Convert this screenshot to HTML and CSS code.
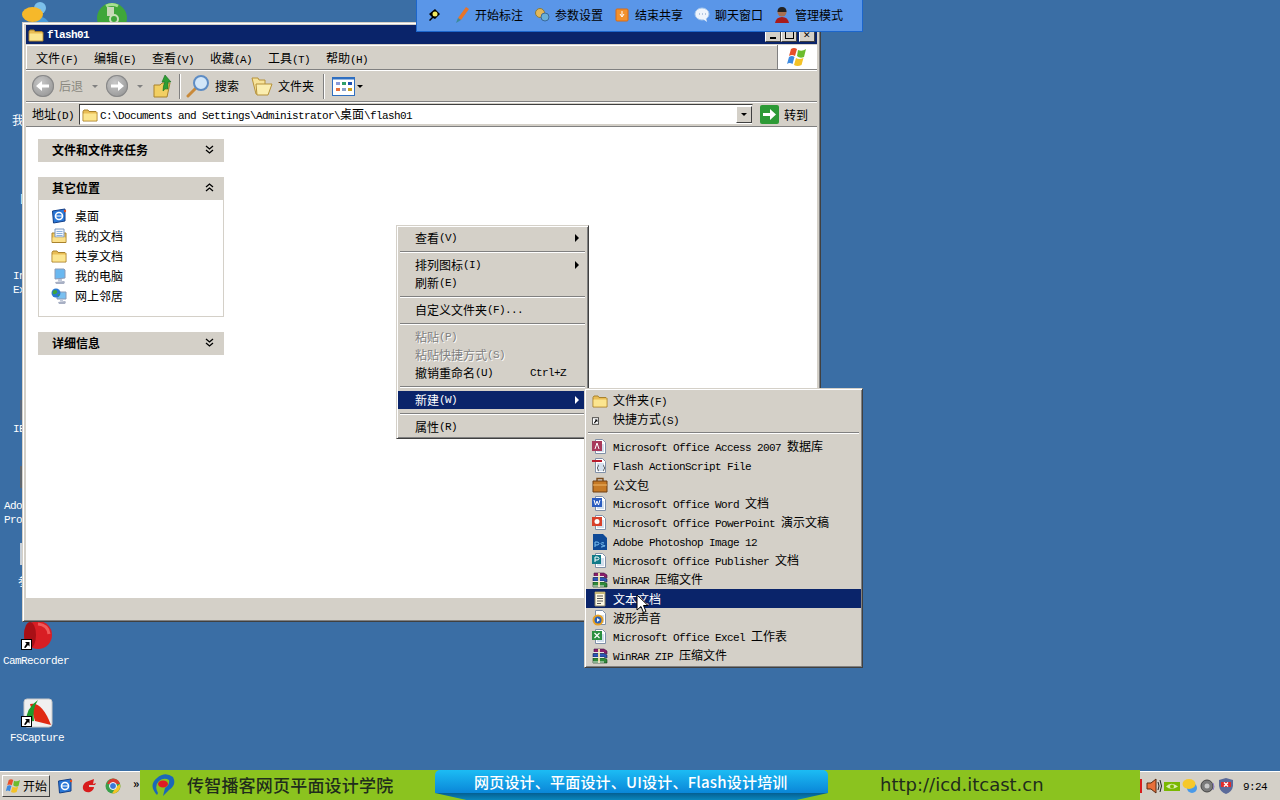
FILE: index.html
```html
<!DOCTYPE html>
<html lang="zh-CN">
<head>
    <meta charset="UTF-8">
    <title>flash01</title>
    <link rel="stylesheet" href="styles.css">
</head>
<body>
    <svg class="defs" xmlns="http://www.w3.org/2000/svg">
        <symbol id="i-folder" viewBox="0 0 16 16">
            <path d="M1 4.500 2 3h4l1 1.500h7l1 1V14H1z" fill="#e9bd55" stroke="#a9822c"/>
            <path d="M1.500 6.500h13V13.500h-13z" fill="#fbe58f"/>
        </symbol>
        <symbol id="i-docs" viewBox="0 0 16 16">
            <path d="M1 5h14v9.500H1z" fill="#f0c860" stroke="#a9822c"/>
            <path d="M4 1h9v8H4z" fill="#f4f8fe" stroke="#7a98c0"/>
            <path d="M5.500 3.500h6M5.500 5.500h6M5.500 7.500h6" stroke="#8ab0dc"/>
            <path d="M1.500 9.500h13v4.500h-13z" fill="#fbe08a"/>
        </symbol>
        <symbol id="i-rar" viewBox="0 0 16 16">
            <path d="M2 1h10l3 2v3l-3-1H2z" fill="#8a1f6a" stroke="#3a1040" stroke-width=".6"/>
            <path d="M1 5.500h11l3 1.500v3l-3-1H1z" fill="#2b55b8" stroke="#10204a" stroke-width=".6"/>
            <path d="M1 10h11l3 1.500V15H1z" fill="#2f8a3a" stroke="#103a18" stroke-width=".6"/>
            <path d="M6 1h2v14H6z" fill="#e8d9a0"/>
            <path d="M1 4.500h11M1 9.500h11M1 14h11" stroke="#e8e8e8"/>
        </symbol>
        <symbol id="i-page" viewBox="0 0 16 16">
            <path d="M3.500 .5h7l3 3v11h-10z" fill="#fff" stroke="#8090a8"/>
            <path d="M5 6h7M5 8h7M5 10h7M5 12h7" stroke="#a8c0dc"/>
        </symbol>
        <symbol id="i-link" viewBox="0 0 11 11">
            <path d="M0 0h11v11H0z" fill="#000"/>
            <path d="M1 1h9v9H1z" fill="#fff"/>
            <path d="M3 8.500 5.500 4.500 4 3h4.500v4.500L7 6 4.500 9z" fill="#000"/>
        </symbol>
        <symbol id="i-screen" viewBox="0 0 16 16">
            <path d="M4 1h9l1 1v8l-10 1z" fill="#6ab8f0" stroke="#8a9ab8"/>
            <path d="M4 14l9-1 1 1-1 2H5z" fill="#a8b0c4"/>
            <path d="M7 11h4v2.500H7z" fill="#c0c8d8"/>
        </symbol>
        <symbol id="i-net" viewBox="0 0 16 16">
            <path d="M6 4h9v7H6z" fill="#7ac0f0" stroke="#8a9ab8"/>
            <path d="M7 14l7-1 1 1-1 2H8z" fill="#a8b0c4"/>
            <path d="M9 11h3v2.500H9z" fill="#c0c8d8"/>
            <circle cx="5" cy="5" r="4.500" fill="#2a7ad0"/>
            <path d="M2 3q3-2 4 0t-2 3-2-3zM6 7l3-1-1 2z" fill="#3fa63a"/>
        </symbol>
        <symbol id="i-ie" viewBox="0 0 16 16">
            <path d="M1.500 3 14 1v12L2.500 15z" fill="#2a78d8" stroke="#123f88"/>
            <circle cx="8" cy="8" r="3.500" fill="none" stroke="#fff" stroke-width="1.600"/>
            <path d="M4.500 8h7" stroke="#fff"/>
            <circle cx="14" cy="3" r="1.200" fill="#e8501c"/>
        </symbol>
        <symbol id="i-flag" viewBox="0 0 24 24">
            <path d="M5 4q3-2 6 0l-2 7q-3-2-6 0z" fill="#e8502a"/>
            <path d="M12 5q4 2 8-1l-2 8q-4 2-7-1z" fill="#6cbc2c"/>
            <path d="M3 12q3-2 5.500 0l-2 7q-3-2-5.500 0z" fill="#3d8ae0"/>
            <path d="M10 13q3 2 7.500 0l-2 7q-4 2-7.500 0z" fill="#f4c226"/>
        </symbol>
        <symbol id="i-chev-down" viewBox="0 0 9 9">
            <path d="M1 1l3.500 3L8 1M1 5l3.500 3L8 5" fill="none" stroke="#000" stroke-width="1.300"/>
        </symbol>
        <symbol id="i-chev-up" viewBox="0 0 9 9">
            <path d="M1 4l3.500-3L8 4M1 8l3.500-3L8 8" fill="none" stroke="#000" stroke-width="1.300"/>
        </symbol>
    </svg>

    <main class="desktop">
        <svg class="desk-icon di-people" viewBox="0 0 30 24">
            <circle cx="19" cy="8" r="6" fill="#7cc0ea"/>
            <path d="M12 24q8-14 17 0z" fill="#4a9ad8"/>
            <ellipse cx="11.500" cy="14.500" rx="10.500" ry="7.500" fill="#f6b82a"/>
        </svg>
        <svg class="desk-icon di-green" viewBox="0 0 30 22">
            <circle cx="15" cy="16" r="15" fill="#3fa63a"/>
            <path d="M9 4q6-3 12 0" stroke="#a8e090" stroke-width="3" fill="none"/>
            <path d="M10 5h7v9h-7z" fill="#c8d8b8"/>
            <circle cx="17" cy="17" r="4" fill="none" stroke="#c8e0b8" stroke-width="2"/>
        </svg>
        <div class="peek peek-a"></div>
        <div class="peek peek-b"></div>
        <div class="peek peek-c"></div>
        <div class="desk-label dl-mydocs">我</div>
        <div class="desk-label dl-bracket"><span class="lat">[</span></div>
        <div class="desk-label dl-ie"><span class="lat">In<br>Ex</span></div>
        <div class="desk-label dl-ieb"><span class="lat">IE</span></div>
        <div class="desk-label dl-adobe"><span class="lat">Ado<br>Pro</span></div>
        <div class="desk-label dl-can">参</div>

        <svg class="desk-icon di-cam" viewBox="0 0 30 30">
            <circle cx="16" cy="15" r="14" fill="#d81e24"/>
            <ellipse cx="8" cy="15" rx="6" ry="13" fill="#a81016"/>
            <path d="M16 4q10 1 11 10" stroke="#f05a5a" stroke-width="3" fill="none"/>
        </svg>
        <svg class="desk-link dl-cam"><use href="#i-link"/></svg>
        <div class="desk-label dl-camname"><span class="lat">CamRecorder</span></div>

        <svg class="desk-icon di-fs" viewBox="0 0 30 30">
            <rect x="1" y="1" width="28" height="28" rx="3" fill="#f0f0f0" stroke="#c8c8c8"/>
            <path d="M7 6q12-3 21 21L12 23z" fill="#e02a12"/>
            <path d="M3 24q0-14 12-22-6 9-4 21z" fill="#1f9a2a"/>
        </svg>
        <svg class="desk-link dl-fs"><use href="#i-link"/></svg>
        <div class="desk-label dl-fsname"><span class="lat">FSCapture</span></div>

        <section class="window">
            <header class="titlebar">
                <svg class="ico16"><use href="#i-folder"/></svg>
                <span class="title-text">flash01</span>
                <div class="title-btns">
                    <button class="tbtn"><i class="tb-min"></i></button>
                    <button class="tbtn"><i class="tb-max"></i></button>
                    <button class="tbtn tb-close">✕</button>
                </div>
            </header>
            <nav class="menubar">
                <div class="menus">
                    <span class="menu">文件<span class="lat">(F)</span></span>
                    <span class="menu">编辑<span class="lat">(E)</span></span>
                    <span class="menu">查看<span class="lat">(V)</span></span>
                    <span class="menu">收藏<span class="lat">(A)</span></span>
                    <span class="menu">工具<span class="lat">(T)</span></span>
                    <span class="menu">帮助<span class="lat">(H)</span></span>
                </div>
                <div class="brand"><svg class="flag"><use href="#i-flag"/></svg></div>
            </nav>
            <div class="toolbar">
                <span class="nav-circle">
                    <svg viewBox="0 0 22 22"><path d="M17 9.500h-7V6l-6 5 6 5v-3.500h7z" fill="#fff"/></svg>
                </span>
                <span class="tool-text muted back-text">后退</span>
                <i class="caret caret-muted back-caret"></i>
                <span class="nav-circle">
                    <svg viewBox="0 0 22 22"><path d="M5 9.500h7V6l6 5-6 5v-3.500H5z" fill="#fff"/></svg>
                </span>
                <i class="caret caret-muted fwd-caret"></i>
                <svg class="up-icon" viewBox="0 0 20 24">
                    <path d="M1 11h6l2-2h8l-3 14H1z" fill="#f2cf62" stroke="#a9822c"/>
                    <path d="M12 1l6 7h-3v7q-3-1-5 2 0-6 2-9H9z" fill="#2f9e34" stroke="#176b1e" stroke-width=".6"/>
                </svg>
                <i class="tool-sep sep-a"></i>
                <svg class="search-icon" viewBox="0 0 24 24">
                    <path d="M2 22l8-8" stroke="#c98a3a" stroke-width="3" stroke-linecap="round"/>
                    <circle cx="15" cy="9" r="7" fill="#d2e6f8" stroke="#5d8cc4" stroke-width="2"/>
                </svg>
                <span class="tool-text search-text">搜索</span>
                <svg class="folders-icon" viewBox="0 0 22 20">
                    <path d="M1 2h6l1 2h6v14H5z" fill="#f7e39a" stroke="#b6923a"/>
                    <path d="M5 8h16l-4 11H6z" fill="#fbeeb0" stroke="#b6923a"/>
                </svg>
                <span class="tool-text">文件夹</span>
                <i class="tool-sep sep-b"></i>
                <svg class="views-icon" viewBox="0 0 23 19">
                    <rect x=".5" y=".5" width="22" height="18" fill="#fff" stroke="#2f6fc0"/>
                    <path d="M.5 .5h22v2h-22z" fill="#2f6fc0"/>
                    <path d="M4 5h4v3H4z" fill="#8a9ad8"/><path d="M10 5h4v3h-4z" fill="#2f9e6a"/><path d="M16 5h4v3h-4z" fill="#2050b0"/>
                    <path d="M4 11h4v3H4z" fill="#e8703a"/><path d="M10 11h4v3h-4z" fill="#8aa0c8"/><path d="M16 11h4v3h-4z" fill="#c8a020"/>
                </svg>
                <i class="caret views-caret"></i>
            </div>
            <div class="addressbar">
                <span class="addr-label">地址<span class="lat">(D)</span></span>
                <div class="addr-box">
                    <svg class="ico16"><use href="#i-folder"/></svg>
                    <span class="addr-text"><span class="lat">C:\Documents and Settings\Administrator\</span>桌面<span class="lat">\flash01</span></span>
                    <span class="addr-drop"><i class="caret"></i></span>
                </div>
                <svg class="go-icon" viewBox="0 0 19 19">
                    <rect width="19" height="19" rx="2" fill="#2d9a36"/>
                    <path d="M3 8h7V4l6 5.500-6 5.500v-4H3z" fill="#fff"/>
                </svg>
                <span class="go-text">转到</span>
            </div>
            <div class="client">
                <aside class="taskpane">
                    <div class="pane-head">文件和文件夹任务<svg class="chev"><use href="#i-chev-down"/></svg></div>
                    <div class="pane-head">其它位置<svg class="chev"><use href="#i-chev-up"/></svg></div>
                    <ul class="pane-body">
                        <li><svg class="ico16"><use href="#i-ie"/></svg>桌面</li>
                        <li><svg class="ico16"><use href="#i-docs"/></svg>我的文档</li>
                        <li><svg class="ico16"><use href="#i-folder"/></svg>共享文档</li>
                        <li><svg class="ico16"><use href="#i-screen"/></svg>我的电脑</li>
                        <li><svg class="ico16"><use href="#i-net"/></svg>网上邻居</li>
                    </ul>
                    <div class="pane-head">详细信息<svg class="chev"><use href="#i-chev-down"/></svg></div>
                </aside>
            </div>
            <div class="statusbar"></div>
        </section>

        <div class="context ctx-main">
            <div class="ctx-item has-sub">查看<span class="lat">(V)</span></div>
            <hr class="ctx-sep">
            <div class="ctx-item has-sub">排列图标<span class="lat">(I)</span></div>
            <div class="ctx-item">刷新<span class="lat">(E)</span></div>
            <hr class="ctx-sep">
            <div class="ctx-item">自定义文件夹<span class="lat">(F)...</span></div>
            <hr class="ctx-sep">
            <div class="ctx-item disabled">粘贴<span class="lat">(P)</span></div>
            <div class="ctx-item disabled">粘贴快捷方式<span class="lat">(S)</span></div>
            <div class="ctx-item split">撤销重命名<span class="lat">(U)</span><span class="lat shortcut">Ctrl+Z</span></div>
            <hr class="ctx-sep">
            <div class="ctx-item has-sub active">新建<span class="lat">(W)</span></div>
            <hr class="ctx-sep">
            <div class="ctx-item">属性<span class="lat">(R)</span></div>
        </div>

        <div class="context ctx-new">
            <div class="new-item">
                <svg class="ico16"><use href="#i-folder"/></svg>
                <span>文件夹<span class="lat">(F)</span></span>
            </div>
            <div class="new-item">
                <svg class="ico16 ico-link"><use href="#i-link"/></svg>
                <span>快捷方式<span class="lat">(S)</span></span>
            </div>
            <hr class="ctx-sep">
            <div class="new-item">
                <svg class="ico16" viewBox="0 0 16 16"><use href="#i-page"/><path d="M0 2h10v10H0z" fill="#a83a5a"/><path d="M3 10l2-6 2 6" stroke="#fff" fill="none"/></svg>
                <span><span class="lat">Microsoft Office Access 2007 </span>数据库</span>
            </div>
            <div class="new-item">
                <svg class="ico16" viewBox="0 0 16 16"><use href="#i-page"/><path d="M0 2h10v2H0z" fill="#b81c2c"/><path d="M7 7q-1 0-1 2l-1 1 1 1q0 2 1 2M11 7q1 0 1 2l1 1-1 1q0 2-1 2" stroke="#444" fill="none" stroke-width=".8"/></svg>
                <span><span class="lat">Flash ActionScript File</span></span>
            </div>
            <div class="new-item">
                <svg class="ico16" viewBox="0 0 16 16"><path d="M5 4V1.500h6V4" fill="none" stroke="#7a4a1c" stroke-width="1.400"/><path d="M1 4h14v11H1z" fill="#c67a26" stroke="#6e3f12"/><path d="M1 8h14" stroke="#f0b868"/></svg>
                <span>公文包</span>
            </div>
            <div class="new-item">
                <svg class="ico16" viewBox="0 0 16 16"><use href="#i-page"/><path d="M0 2h10v9H0z" fill="#2a5cc0"/><path d="M2 4l1.500 5L5 5l1.500 4L8 4" stroke="#fff" fill="none"/></svg>
                <span><span class="lat">Microsoft Office Word </span>文档</span>
            </div>
            <div class="new-item">
                <svg class="ico16" viewBox="0 0 16 16"><use href="#i-page"/><path d="M0 2h10v9H0z" fill="#d8402a"/><circle cx="5" cy="6.500" r="2.500" fill="#fff"/></svg>
                <span><span class="lat">Microsoft Office PowerPoint </span>演示文稿</span>
            </div>
            <div class="new-item">
                <svg class="ico16" viewBox="0 0 16 16"><path d="M1 0h10l4 4v12H1z" fill="#0f4a96"/><path d="M3 13V8h2q2 0 2 1.500T5 11H3M12 9q-3-1-3 .5t3 2-3 1.500" stroke="#7ec4f4" fill="none"/></svg>
                <span><span class="lat">Adobe Photoshop Image 12</span></span>
            </div>
            <div class="new-item">
                <svg class="ico16" viewBox="0 0 16 16"><use href="#i-page"/><path d="M0 2h9v9H0z" fill="#0f7a88"/><path d="M3 9V4h2q2 0 2 1.500T5 7H3" stroke="#fff" fill="none"/></svg>
                <span><span class="lat">Microsoft Office Publisher </span>文档</span>
            </div>
            <div class="new-item">
                <svg class="ico16"><use href="#i-rar"/></svg>
                <span><span class="lat">WinRAR </span>压缩文件</span>
            </div>
            <div class="new-item active">
                <svg class="ico16" viewBox="0 0 16 16"><path d="M3 1h10v14H3z" fill="#fdf8e4" stroke="#8a8468"/><path d="M5 5h6M5 7.500h6M5 10h6M5 12.500h4" stroke="#555"/><path d="M3 1h10v2H3z" fill="#c8b878"/></svg>
                <span>文本文档</span>
            </div>
            <div class="new-item">
                <svg class="ico16" viewBox="0 0 16 16"><use href="#i-page"/><circle cx="6" cy="10" r="5.500" fill="#e8a020"/><circle cx="6" cy="10" r="3.500" fill="#2860b8"/><path d="M5 8l3 2-3 2z" fill="#fff"/></svg>
                <span>波形声音</span>
            </div>
            <div class="new-item">
                <svg class="ico16" viewBox="0 0 16 16"><use href="#i-page"/><path d="M0 2h10v9H0z" fill="#2c9040"/><path d="M2.500 4l5 5M7.500 4l-5 5" stroke="#fff" stroke-width="1.200"/></svg>
                <span><span class="lat">Microsoft Office Excel </span>工作表</span>
            </div>
            <div class="new-item">
                <svg class="ico16"><use href="#i-rar"/></svg>
                <span><span class="lat">WinRAR ZIP </span>压缩文件</span>
            </div>
        </div>

        <svg class="cursor" viewBox="0 0 13 20">
            <path d="M1 1v15l4-3.500 2.500 6 2.500-1-2.500-6H12z" fill="#fff" stroke="#000"/>
        </svg>

        <div class="floatbar">
            <span class="float-pin">
                <svg viewBox="0 0 14 14"><path d="M2 6 8 1l5 5-5 5-2-1-3 3-1-1 3-3z" fill="#000"/><circle cx="8" cy="6" r="2.500" fill="#f0e860"/></svg>
            </span>
            <span class="float-item">
                <svg viewBox="0 0 16 18"><path d="M12 1l3 2-8 11-3-2z" fill="#e8742a"/><path d="M4 12l3 2-5 3z" fill="#3c8a9a"/></svg>
                开始标注
            </span>
            <span class="float-item">
                <svg viewBox="0 0 16 18"><circle cx="6" cy="7" r="4.500" fill="#e2b85a" stroke="#8a7a3a"/><circle cx="11" cy="11" r="4" fill="#6ab0d8" stroke="#3a6a9a"/></svg>
                参数设置
            </span>
            <span class="float-item">
                <svg viewBox="0 0 16 18"><rect x="2" y="3" width="12" height="12" rx="1" fill="#f2922e" stroke="#d86a14"/><path d="M8 5v5M6 8l2 3 2-3" stroke="#fff" fill="none"/></svg>
                结束共享
            </span>
            <span class="float-item">
                <svg viewBox="0 0 16 18"><ellipse cx="8" cy="8" rx="7" ry="6" fill="#eef4fc" stroke="#a8c8ec"/><path d="M9 13l4 3-1-4z" fill="#eef4fc"/><path d="M5 8h1M8 8h1M11 8h1" stroke="#7a9ac8"/></svg>
                聊天窗口
            </span>
            <span class="float-item">
                <svg viewBox="0 0 16 18"><circle cx="8" cy="6" r="4.500" fill="#a87050"/><path d="M3.500 6q0-5 4.500-5t4.500 5z" fill="#222"/><path d="M1 17q1-6 7-6t7 6z" fill="#a81c1c"/></svg>
                管理模式
            </span>
        </div>
    </main>

    <footer class="taskbar">
        <div class="task-left">
            <button class="start">
                <svg class="start-flag"><use href="#i-flag"/></svg>开始
            </button>
            <svg class="quick" viewBox="0 0 16 16"><use href="#i-ie"/></svg>
            <svg class="quick" viewBox="0 0 16 16"><path d="M13 1 5 4Q1 7 2 11q2 4 7 3 4-2 4-5H8V7h6l1-2-3 1z" fill="#d81c1c"/></svg>
            <svg class="quick" viewBox="0 0 16 16"><circle cx="8" cy="8" r="7.500" fill="#3aa04a"/><path d="M8 .5A7.500 7.500 0 0 1 15 6H8 2A7.500 7.500 0 0 1 8 .5z" fill="#d83a2e"/><path d="M15 6a7.500 7.500 0 0 1-8 9.500L11 9z" fill="#f4c426"/><circle cx="8" cy="8" r="3.500" fill="#3a78d8" stroke="#fff"/></svg>
            <span class="more">»</span>
        </div>
        <div class="banner">
            <svg class="banner-logo" viewBox="0 0 24 24">
                <path d="M6 22Q-3 12 6 5 14-2 22 4 26 12 18 17l-6 6 2-8q5-3 4-8-5-3-10 1-5 5-1 12z" fill="#1c68b8"/>
                <ellipse cx="12" cy="11" rx="5" ry="3.500" fill="#e01c24"/>
            </svg>
            <span class="banner-title">传智播客网页平面设计学院</span>
            <div class="ribbon"><span>网页设计、平面设计、UI设计、Flash设计培训</span></div>
            <span class="banner-url">http://icd.itcast.cn</span>
        </div>
        <div class="tray">
            <i class="tray-edge"></i>
            <svg class="tray-icon" viewBox="0 0 16 16"><path d="M1 5h4l5-4v14l-5-4H1z" fill="#e8703a" stroke="#5a2a10"/><path d="M12 4q2 4 0 8M14 2q3 6 0 12" stroke="#222" fill="none"/></svg>
            <svg class="tray-icon" viewBox="0 0 16 16"><path d="M0 4h16v9H0z" fill="#7ab800"/><path d="M2 8.500Q7 3 14 8.500 7 13 2 8.500z" fill="#d8ecb0"/><circle cx="8" cy="8.500" r="2" fill="#7ab800"/></svg>
            <svg class="tray-icon" viewBox="0 0 16 16"><circle cx="10" cy="10" r="5" fill="#4a9ae8"/><ellipse cx="7" cy="6" rx="6.500" ry="5" fill="#f6c82a"/></svg>
            <svg class="tray-icon" viewBox="0 0 16 16"><circle cx="7" cy="8" r="6" fill="#7a7a7a" stroke="#444"/><circle cx="7" cy="8" r="2.500" fill="#c8c8c8"/><path d="M13 5q2 4 0 7" stroke="#8a7ac8" fill="none"/></svg>
            <svg class="tray-icon" viewBox="0 0 16 16"><path d="M8 0l7 2v6q-1 6-7 8-6-2-7-8V2z" fill="#5a6a9a"/><path d="M3 4h10v5H3z" fill="#e02a2a"/><path d="M6 4.500l4 4M10 4.500l-4 4" stroke="#fff" stroke-width="1.400"/></svg>
            <span class="clock"><span class="lat">9:24</span></span>
        </div>
    </footer>
</body>
</html>
```

FILE: styles.css
```css
* {
    box-sizing: border-box;
}

html, body {
    margin: 0;
    height: 100%;
}

body {
    width: 1280px;
    height: 800px;
    overflow: hidden;
    display: flex;
    flex-direction: column;
    background-color: #3a6ea5;
    color: #000;
    font-family: "Noto Sans CJK SC", "Liberation Sans", sans-serif;
    font-size: 12px;
    line-height: 18px;
}

/* latin text in the screenshot is a 6px wide bitmap face */
.lat {
    font-family: "Liberation Mono", monospace;
    font-size: 11px;
    letter-spacing: -0.6px;
    white-space: pre;
}

.defs {
    display: none;
}

.ico16 {
    width: 16px;
    height: 16px;
    flex: none;
}

/* desktop */
.desktop {
    position: relative;
    flex: 1;
}

.desk-icon, .desk-link, .desk-label, .peek {
    position: absolute;
}

.desk-label {
    color: #fff;
    line-height: 12px;
}

.di-people { left: 21px; top: 0; width: 30px; height: 24px; }
.di-green { left: 97px; top: 2px; width: 30px; height: 22px; }
.di-cam { left: 22px; top: 620px; width: 30px; height: 30px; }
.di-fs { left: 23px; top: 698px; width: 30px; height: 30px; }
.desk-link { width: 11px; height: 11px; }
.dl-cam { left: 21px; top: 639px; }
.dl-fs { left: 21px; top: 716px; }
.dl-mydocs { left: 12px; top: 114px; }
.dl-bracket { left: 19px; top: 191px; }
.dl-ie { left: 13px; top: 268px; }
.dl-ieb { left: 13px; top: 421px; }
.dl-adobe { left: 4px; top: 498px; }
.dl-can { left: 18px; top: 575px; }
.dl-camname { left: 3px; top: 653px; }
.dl-fsname { left: 10px; top: 730px; }
.peek { left: 20px; width: 3px; }
.peek-a { top: 400px; height: 20px; background: #5a6a80; }
.peek-b { top: 466px; height: 22px; background: #606870; }
.peek-c { top: 543px; height: 22px; background: #c8d0d8; }

/* explorer window */
.window {
    position: absolute;
    left: 22px;
    top: 22px;
    width: 799px;
    height: 600px;
    display: flex;
    flex-direction: column;
    padding: 2px 3px 3px;
    background-color: #d4d0c8;
    border: 1px solid;
    border-color: #d4d0c8 #404040 #404040 #d4d0c8;
    box-shadow: inset 1px 1px #fff, inset -1px -1px #808080;
}

.titlebar {
    height: 19px;
    flex: none;
    display: flex;
    align-items: center;
    padding: 0 2px;
    background-color: #0a246a;
    color: #fff;
}

.title-text {
    margin-left: 3px;
    font-family: "Liberation Mono", monospace;
    font-size: 11px;
    font-weight: 700;
    letter-spacing: -0.6px;
}

.title-btns {
    margin-left: auto;
    display: flex;
}

.tbtn {
    width: 16px;
    height: 14px;
    padding: 0;
    display: flex;
    align-items: center;
    justify-content: center;
    background-color: #d4d0c8;
    border: 1px solid;
    border-color: #fff #404040 #404040 #fff;
    font-size: 9px;
    line-height: 12px;
    color: #000;
}

.tb-close {
    margin-left: 2px;
}

.tb-min {
    width: 6px;
    height: 2px;
    margin-top: 7px;
    background: #000;
}

.tb-max {
    width: 9px;
    height: 9px;
    border: 1px solid #000;
    border-top-width: 2px;
}

.menubar {
    height: 25px;
    flex: none;
    margin-top: 1px;
    display: flex;
    border-bottom: 1px solid #808080;
}

.menus {
    flex: 1;
    display: flex;
    align-items: center;
    padding: 2px 0 0 9px;
    border-top: 1px solid #fff;
    border-left: 1px solid #fff;
}

.menu {
    width: 58px;
}

.brand {
    width: 40px;
    display: flex;
    align-items: center;
    justify-content: center;
    background-color: #fff;
    border-left: 1px solid #808080;
}

.flag {
    width: 24px;
    height: 24px;
}

.toolbar {
    height: 32px;
    flex: none;
    display: flex;
    align-items: center;
    padding-left: 6px;
    border-top: 1px solid #fff;
    border-bottom: 1px solid #808080;
}

.nav-circle {
    width: 22px;
    height: 22px;
    flex: none;
    border-radius: 50%;
    background: radial-gradient(circle at 40% 35%, #c8c8c8, #8a8a8a);
    box-shadow: inset 0 0 0 1px #888;
}

.nav-circle svg {
    display: block;
}

.tool-text {
    margin-left: 5px;
}

.muted {
    color: #8a8880;
}

.caret {
    width: 0;
    height: 0;
    flex: none;
    border: 3px solid transparent;
    border-top: 3px solid #000;
    border-bottom: 0;
}

.caret-muted {
    border-top-color: #808080;
}

.back-caret { margin-left: 9px; margin-right: 8px; }
.fwd-caret { margin-left: 9px; }
.up-icon { width: 20px; height: 24px; margin-left: 10px; }
.tool-sep { width: 2px; height: 25px; flex: none; border-left: 1px solid #808080; border-right: 1px solid #fff; }
.sep-a { margin-left: 6px; }
.search-icon { width: 24px; height: 24px; margin-left: 5px; }
.search-text { width: 36px; }
.folders-icon { width: 22px; height: 20px; }
.sep-b { margin-left: 9px; }
.views-icon { width: 23px; height: 19px; margin-left: 7px; }
.views-caret { margin-left: 2px; }

.addressbar {
    height: 24px;
    flex: none;
    display: flex;
    align-items: center;
    padding-left: 6px;
    border-top: 1px solid #fff;
}

.addr-label {
    width: 47px;
}

.addr-box {
    width: 674px;
    height: 21px;
    display: flex;
    align-items: center;
    padding-left: 2px;
    background-color: #fff;
    border: 1px solid;
    border-color: #404040 #d4d0c8 #d4d0c8 #404040;
}

.addr-text {
    margin-left: 2px;
    flex: 1;
}

.addr-drop {
    width: 16px;
    height: 17px;
    display: flex;
    align-items: center;
    justify-content: center;
    background-color: #d4d0c8;
    border: 1px solid;
    border-color: #fff #404040 #404040 #fff;
}

.go-icon {
    width: 19px;
    height: 19px;
    margin-left: 7px;
}

.go-text {
    margin-left: 5px;
}

.client {
    flex: 1;
    background-color: #fff;
    padding: 12px 0 0 12px;
    border-top: 1px solid #808080;
}

.taskpane {
    width: 186px;
}

.pane-head {
    height: 23px;
    display: flex;
    align-items: center;
    justify-content: space-between;
    padding: 0 10px 2px 14px;
    background-color: #d4d0c8;
    font-weight: 700;
    margin-bottom: 15px;
}

.chev {
    width: 9px;
    height: 9px;
    flex: none;
}

.pane-head:nth-child(2) {
    margin-bottom: 0;
}

.pane-body {
    margin: 0 0 15px;
    padding: 6px 0 10px 12px;
    list-style: none;
    border: 1px solid #d4d0c8;
    border-top: 0;
}

.pane-body li {
    height: 20px;
    display: flex;
    align-items: center;
    gap: 8px;
}

.statusbar {
    height: 20px;
    flex: none;
    background-color: #d4d0c8;
}

/* context menus */
.context {
    position: absolute;
    background-color: #d4d0c8;
    border: 1px solid;
    border-color: #d4d0c8 #404040 #404040 #d4d0c8;
    box-shadow: inset 1px 1px #fff, inset -1px -1px #808080;
    padding: 3px 1px;
}

.ctx-main {
    left: 396px;
    top: 225px;
    width: 193px;
    height: 214px;
}

.ctx-new {
    left: 584px;
    top: 388px;
    width: 279px;
    height: 280px;
    padding-top: 2px;
}

.ctx-item {
    height: 18px;
    display: flex;
    align-items: center;
    padding-left: 17px;
    position: relative;
}

.ctx-sep {
    height: 2px;
    margin: 4px 2px 3px;
    border: 0;
    border-top: 1px solid #808080;
    border-bottom: 1px solid #fff;
}

.ctx-new .ctx-sep {
    margin-top: 3px;
}

.has-sub::after {
    content: "";
    position: absolute;
    right: 8px;
    top: 5px;
    border: 4px solid transparent;
    border-left: 4px solid currentColor;
    border-right: 0;
}

.active {
    background-color: #0a246a;
    color: #fff;
}

.disabled {
    color: #808080;
    text-shadow: 1px 1px #fff;
}

.shortcut {
    margin-left: auto;
    margin-right: 21px;
}

.new-item {
    height: 19px;
    display: flex;
    align-items: center;
    gap: 5px;
    padding-left: 6px;
    white-space: pre;
}

.ico-link {
    padding: 5px 9px 3px 0;
}

.cursor {
    position: absolute;
    left: 636px;
    top: 594px;
    width: 13px;
    height: 20px;
}

/* sharing toolbar at the top of the screen */
.floatbar {
    position: absolute;
    left: 416px;
    top: 0;
    width: 447px;
    height: 32px;
    display: flex;
    align-items: center;
    padding: 0 0 2px 10px;
    background-color: #5a96e8;
    border: 1px solid #1c66cc;
    border-top: 0;
}

.float-pin {
    width: 14px;
    height: 14px;
    margin-right: 13px;
}

.float-pin svg {
    display: block;
}

.float-item {
    width: 80px;
    display: flex;
    align-items: center;
    gap: 5px;
}

.float-item svg {
    width: 16px;
    height: 18px;
    flex: none;
}

/* taskbar */
.taskbar {
    height: 30px;
    flex: none;
    display: flex;
}

.task-left, .tray {
    width: 140px;
    margin-top: 1px;
    background-color: #d4d0c8;
    border-top: 1px solid #fff;
    display: flex;
    align-items: center;
}

.task-left {
    padding-left: 2px;
}

.start {
    width: 48px;
    height: 22px;
    padding: 0 0 0 2px;
    display: flex;
    align-items: center;
    background-color: #d4d0c8;
    border: 1px solid;
    border-color: #fff #404040 #404040 #fff;
    font: inherit;
}

.start-flag {
    width: 18px;
    height: 18px;
}

.quick {
    width: 16px;
    height: 16px;
    margin-left: 8px;
}

.quick:first-of-type {
    margin-left: 7px;
}

.more {
    margin-left: 12px;
    font-weight: 700;
    margin-top: -6px;
}

.banner {
    width: 1000px;
    display: flex;
    align-items: center;
    padding-left: 11px;
    background-color: #8bc31f;
}

.banner-logo {
    width: 24px;
    height: 24px;
    flex: none;
}

.banner-title {
    width: 206px;
    margin-left: 12px;
    font-size: 17px;
    font-weight: 500;
    letter-spacing: 0.2px;
    color: #1f2d1c;
    white-space: nowrap;
}

.ribbon {
    width: 393px;
    height: 30px;
    margin-left: 42px;
    flex: none;
    padding: 1px 0 0 39px;
    color: #fff;
    font-size: 15px;
    font-weight: 500;
    letter-spacing: 0.2px;
    line-height: 22px;
    border-radius: 5px 5px 0 0;
    background: linear-gradient(#1cbcf4, #0a86d8) top / 100% 23px no-repeat;
    position: relative;
}

.ribbon::after {
    content: "";
    position: absolute;
    left: 0;
    top: 23px;
    width: 100%;
    height: 7px;
    background: linear-gradient(#045f92, #0a86bc);
    clip-path: polygon(0 0, 100% 0, 92% 100%, 8% 100%);
}

.banner-url {
    margin-left: 52px;
    font-family: "DejaVu Sans", sans-serif;
    font-size: 18px;
    color: #1f2d1c;
    white-space: nowrap;
}

.tray {
    padding-left: 0;
}

.tray-edge {
    width: 2px;
    height: 14px;
    margin-right: 4px;
    background-color: #d81c1c;
}

.tray-icon {
    width: 16px;
    height: 16px;
    margin-right: 2px;
    flex: none;
}

.clock {
    margin-left: 7px;
}
```
